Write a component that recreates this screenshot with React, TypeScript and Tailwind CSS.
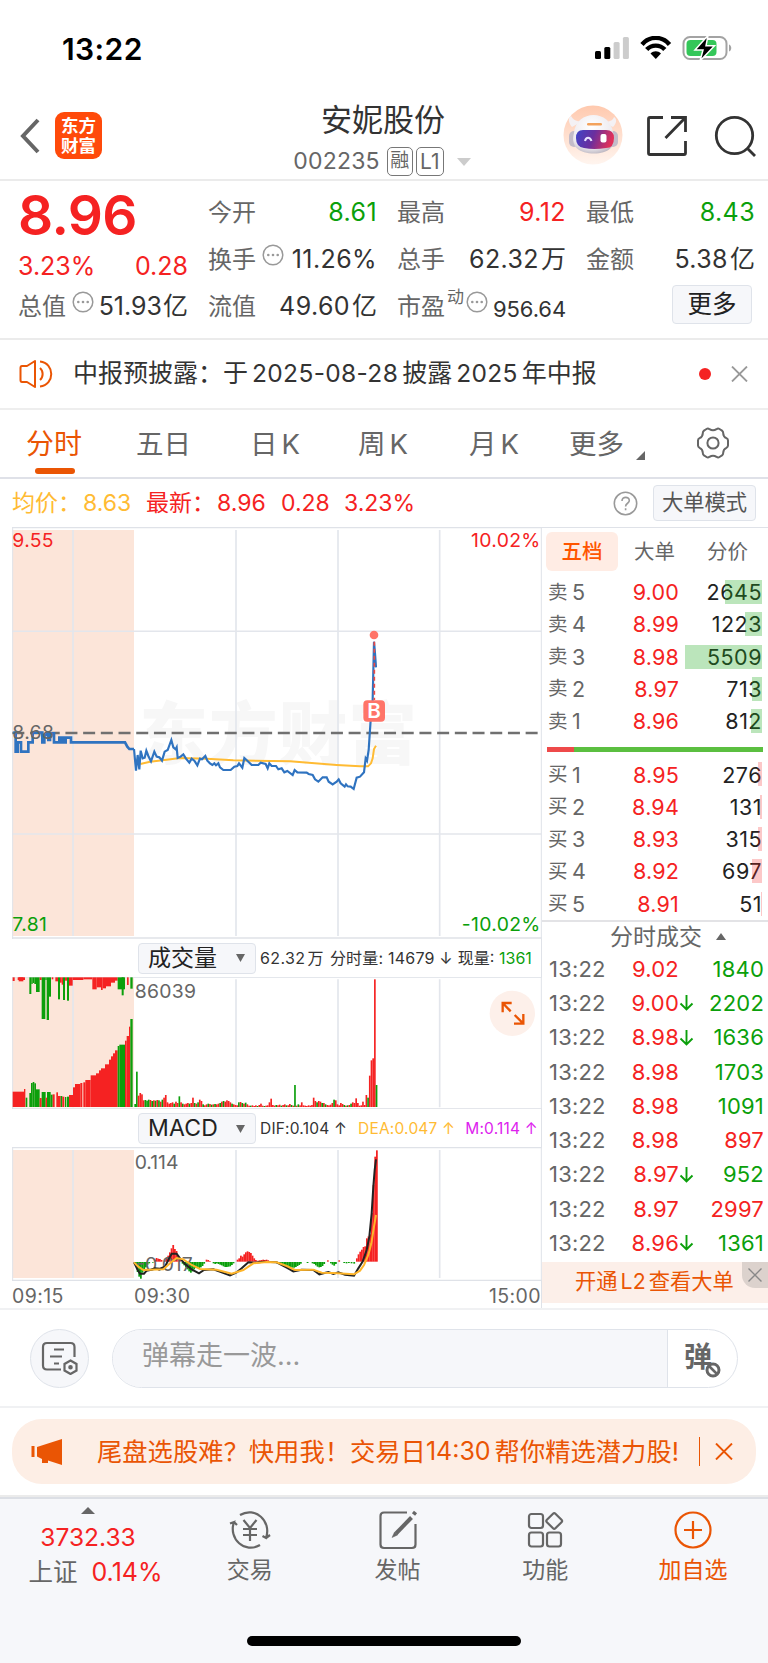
import React from 'react'

const RED = '#f52222'
const GREEN = '#0b9f0b'

// [x0, x1, height, up]
const auctionBottom: [number, number, number, boolean][] = [
  [38, 72, 46, true], [72, 76, 54, true], [77, 82, 28, false],
  [88, 93, 42, false], [93, 98, 72, false], [98, 103, 75, false], [103, 108, 71, false], [108, 119, 53, false],
  [119, 125, 27, true], [125, 137, 45, false], [137, 141, 28, true], [141, 152, 45, false], [152, 158, 37, false],
  [158, 164, 38, true], [169, 174, 44, true], [174, 182, 33, true], [182, 187, 33, false], [187, 193, 31, true],
  [195, 199, 30, false], [201, 207, 31, false], [207, 219, 36, true], [219, 225, 59, true], [225, 241, 69, true], [241, 247, 72, true],
  [250, 256, 74, true], [256, 272, 81, true], [272, 288, 95, true], [288, 297, 101, true], [297, 303, 110, true],
  [303, 315, 116, true], [315, 327, 128, true], [327, 333, 142, true], [333, 339, 152, true], [339, 345, 161, true],
  [345, 353, 170, true], [353, 358, 183, false], [358, 375, 187, false], [375, 380, 199, true], [380, 387, 213, true],
  [387, 391, 241, true], [391, 398, 264, false],
]

const auctionTop: [number, number, number, boolean][] = [
  [38, 44, 11, true], [53, 75, 8, true], [56, 70, 12, true], [88, 94, 50, false], [94, 98, 20, false], [98, 103, 17, false],
  [103, 108, 20, false], [108, 119, 44, false], [119, 125, 8, true], [125, 136, 125, false], [136, 140, 8, false],
  [140, 147, 128, false], [147, 153, 58, false], [155, 160, 6, true], [166, 174, 12, true], [174, 180, 66, false],
  [180, 185, 16, true], [185, 189, 22, true], [189, 195, 68, false], [195, 201, 10, true], [201, 207, 70, false],
  [207, 218, 25, true], [218, 250, 8, true], [250, 277, 6, true], [277, 290, 36, true], [290, 303, 30, true], [303, 308, 38, true],
  [308, 318, 33, true], [318, 333, 27, true], [333, 345, 16, true], [345, 353, 10, true], [353, 375, 36, false],
  [365, 371, 54, false], [381, 386, 23, true], [391, 398, 34, false],
]

// minute volume, negative means a falling minute
const volume = [
  -9, -106, 34, 42, 38, 20, -21, -19, -22, 21, -18, 20, -19, 21, -20, 16, -22, 28, 36, 14,
  10, 12, 14, -10, 16, 12, -32, 14, -10, 8, 10, 12, -10, 12, 28, -12, 10, -14, 22, 18,
  -8, 5, 8, -10, 9, -7, 8, -9, 8, 10, -12, 16, -18, 16, 20, 18, 14, -10, 8, 6,
  5, -14, 15, -12, 10, -13, 8, 4, -4, 5, 3, 5, -3, 6, 10, 4, -3, 4, 5, 14,
  25, 6, 4, -6, 5, 7, -4, 6, 8, -5, 5, 9, -6, 4, -66, 4, -8, 5, 14, 5,
  4, 3, 5, 4, 6, 28, 18, -14, 18, 16, -12, 12, -8, 6, 5, 7, 12, -22, 20, 8,
  5, 12, 9, -6, 4, -5, 6, -10, 14, 12, 26, 12, 4, 5, 16, 6, 36, -28, 94, 140,
  146, 383, -66,
]

const macd: [number, number][] = [
  [405, -14], [410, -30], [415, -44], [420, -50], [425, -32], [430, -26], [435, -16], [440, -8], [445, -4], [456, -2],
  [462, 6], [467, 11], [472, 9], [477, 8], [482, 5], [492, 4], [497, 10], [502, 18], [507, 28], [512, 40], [517, 50],
  [522, 38], [527, 32], [532, 18], [537, 8], [545, -5], [550, -10], [555, -16], [560, -22], [565, -28], [570, -32],
  [575, -28], [580, -22], [585, -18], [590, -16], [595, -18], [600, -16], [605, -12], [610, -5], [617, 6], [622, 5],
  [627, 2], [638, -4], [643, -6], [648, -4], [653, -6], [658, -8], [663, -10], [668, -13], [673, -15], [678, -15],
  [683, -14], [688, -13], [693, -9], [698, -4], [710, 6], [715, 10], [720, 18], [725, 15], [730, 22], [735, 28],
  [740, 31], [745, 29], [750, 26], [755, 18], [760, 10], [765, 5], [772, 3], [777, 4], [782, 5], [787, 6], [792, 5],
  [797, 6], [802, 4], [825, -3], [830, -5], [835, -6], [840, -7], [845, -8], [850, -10], [855, -11], [860, -13],
  [865, -15], [870, -16], [875, -17], [880, -17], [885, -15], [890, -12], [895, -9], [900, -5], [920, -3], [935, -4],
  [940, -6], [945, -10], [950, -14], [955, -16], [960, -15], [965, -12], [970, -6], [981, 4], [990, -4], [995, -8],
  [1000, -11], [1005, -6], [1015, 4], [1030, -3], [1037, -4], [1044, -3], [1052, -4], [1060, -5], [1068, 10],
  [1073, 22], [1078, 30], [1083, 36], [1088, 44], [1093, 46], [1098, 70], [1103, 76], [1108, 82], [1113, 146],
  [1118, 230], [1123, 315], [1128, 334],
]

const asks = [
  { name: '卖', level: 5, price: '9.00', qty: '2645', bar: 'w-[37px]' },
  { name: '卖', level: 4, price: '8.99', qty: '1223', bar: 'w-[17px]' },
  { name: '卖', level: 3, price: '8.98', qty: '5509', bar: 'w-[77px]' },
  { name: '卖', level: 2, price: '8.97', qty: '713', bar: 'w-[10px]' },
  { name: '卖', level: 1, price: '8.96', qty: '812', bar: 'w-[11px]' },
]

const bids = [
  { name: '买', level: 1, price: '8.95', qty: '276', bar: 'w-[4px]' },
  { name: '买', level: 2, price: '8.94', qty: '131', bar: 'w-[2px]' },
  { name: '买', level: 3, price: '8.93', qty: '315', bar: 'w-[4px]' },
  { name: '买', level: 4, price: '8.92', qty: '697', bar: 'w-[10px]' },
  { name: '买', level: 5, price: '8.91', qty: '51', bar: 'w-px' },
]

const trades = [
  { price: '9.02', down: false, qty: '1840', sell: true },
  { price: '9.00', down: true, qty: '2202', sell: true },
  { price: '8.98', down: true, qty: '1636', sell: true },
  { price: '8.98', down: false, qty: '1703', sell: true },
  { price: '8.98', down: false, qty: '1091', sell: true },
  { price: '8.98', down: false, qty: '897', sell: false },
  { price: '8.97', down: true, qty: '952', sell: true },
  { price: '8.97', down: false, qty: '2997', sell: false },
  { price: '8.96', down: true, qty: '1361', sell: true },
]

function StatusBar() {
  return (
    <div className="flex h-[98px] items-center justify-between pl-[62px] pr-[36px]">
      <span className="text-[30px] font-semibold tracking-[0.4px] text-black">13:22</span>
      <svg width="137" height="26" viewBox="0 0 137 26">
        <rect x="0" y="15" width="6" height="8" rx="1.5" />
        <rect x="9.3" y="11" width="6" height="12" rx="1.5" />
        <rect x="18.6" y="6" width="6" height="17" rx="1.5" fill="#ccc" />
        <rect x="27.9" y="1" width="6" height="22" rx="1.5" fill="#ccc" />
        <g fill="none" stroke="#000" strokeWidth="4.4">
          <path d="M47 8.5 C54.5 -0.3 67 -0.3 74.5 8.5" />
          <path d="M51.7 13.6 C56.5 8.3 65 8.3 69.8 13.6" />
        </g>
        <path d="M55.5 17.5 C58.5 14.6 63 14.6 66 17.5 L60.8 23 Z" />
        <rect x="88.5" y="1" width="43" height="22" rx="6.5" fill="none" stroke="#a3a3a3" strokeWidth="2" />
        <path d="M134 8.5 C137 9.5 137 14.5 134 15.5 Z" fill="#a3a3a3" />
        <rect x="91.5" y="4" width="30" height="16" rx="4" fill="#34c759" />
        <path d="M113 -0.5 L100 14 H108 L105 25 L119.500 9.800 H111 Z" stroke="#fff" strokeWidth="1.5" />
      </svg>
    </div>
  )
}

function Header() {
  return (
    <div className="flex h-[83px] border-b-2 border-[#ebebeb]">
      <div className="flex w-[259px] items-start pl-[19px] pt-[14px]">
        <svg className="mt-[5px]" width="22" height="38" viewBox="0 0 22 38" fill="none" stroke="#666" strokeWidth="4">
          <path d="M19 3 L4 19 L19 35" />
        </svg>
        <div className="ml-[14px] h-[47px] w-[47px] rounded-[9px] bg-[#ff4a0a] pt-[4px] text-center text-[17.5px] font-bold leading-[19.5px] text-white">
          东方
          <br />
          财富
        </div>
      </div>
      <div className="flex flex-1 flex-col items-center">
        <div className="mt-[4px] text-[31px] leading-[36px] text-[#333]">安妮股份</div>
        <div className="mr-[2px] mt-[8px] flex h-[31px] items-center text-[#666]">
          <span className="text-[23px] tracking-[0.2px]">002235</span>
          <span className="ml-[7px] flex h-[29px] w-[26px] items-center justify-center rounded-[5px] border-[1.5px] border-[#777] text-[19px]">融</span>
          <span className="ml-[3px] flex h-[29px] w-[28px] items-center justify-center rounded-[5px] border-[1.5px] border-[#777] text-[21px]">L1</span>
          <svg className="ml-[13px]" width="14" height="8" viewBox="0 0 14 8">
            <path d="M0 0 H14 L7 8 Z" fill="#ccc" />
          </svg>
        </div>
      </div>
      <div className="flex w-[261px] items-start pl-[56px]">
        <svg className="mt-[7px]" width="60" height="60" viewBox="0 0 60 60">
          <defs>
            <linearGradient id="halo" x1="0" y1="0" x2="0" y2="1">
              <stop offset="0" stopColor="#ffc9ae" />
              <stop offset="1" stopColor="#fff5ef" />
            </linearGradient>
            <linearGradient id="visor" x1="0" y1="0" x2="1" y2="0.2">
              <stop offset="0" stopColor="#3f45c8" />
              <stop offset="0.5" stopColor="#6a2f9e" />
              <stop offset="1" stopColor="#e0305a" />
            </linearGradient>
            <radialGradient id="shell" cx="0.45" cy="0.3" r="0.8">
              <stop offset="0" stopColor="#fff" />
              <stop offset="0.7" stopColor="#ece9ee" />
              <stop offset="1" stopColor="#a9a2ae" />
            </radialGradient>
          </defs>
          <circle cx="30" cy="30" r="29.5" fill="url(#halo)" />
          <path d="M9 22 C5 17 5 13 8 11 C10 15 14 16 18 17 Z M50 22 C54 18 54 14 51 12 C50 16 46 16 42 18 Z" fill="#f4f1f4" />
          <rect x="6" y="26" width="10" height="16" rx="5" fill="#c3bcc9" />
          <rect x="45" y="26" width="10" height="16" rx="5" fill="#c3bcc9" />
          <path d="M11 28 C13 4 48 4 50 28 C54 42 45 48.500 31 48.500 C17 48.500 7 42 11 28 Z" fill="url(#shell)" />
          <rect x="24" y="18" width="15" height="2.6" rx="1.3" fill="#f3a25c" />
          <path d="M20 25 H43 Q51 25 51 33 Q51 43 43 43 Q31 45 21 43 Q13 42 13 33 Q13 25 20 25 Z" fill="url(#visor)" />
          <path d="M22 36 C23 31.500 27 31.500 28.500 36" fill="none" stroke="#e8e4ff" strokeWidth="2" />
          <rect x="37.500" y="29" width="6" height="8.500" rx="2" fill="#fff" />
        </svg>
        <svg className="ml-[23px] mt-[17px]" width="42" height="42" viewBox="0 0 42 42" fill="none" stroke="#333" strokeWidth="2.8">
          <path d="M17 2.5 H4 Q2.5 2.5 2.5 4 V38 Q2.5 39.5 4 39.5 H38 Q39.5 39.5 39.5 38 V26" />
          <path d="M25 2.5 H39.5 V17 M39 3 L19.5 23" />
        </svg>
        <svg className="ml-[26px] mt-[17px]" width="42" height="42" viewBox="0 0 42 42" fill="none" stroke="#333" strokeWidth="2.8">
          <circle cx="20.5" cy="20.5" r="18.2" />
          <path d="M33 33 L41 41" />
        </svg>
      </div>
    </div>
  )
}

function Dots() {
  return (
    <svg className="shrink-0" width="22" height="22" viewBox="0 0 22 22">
      <circle cx="11" cy="11" r="9.8" fill="none" stroke="#999" strokeWidth="1.5" />
      <circle cx="6.3" cy="11" r="1.3" fill="#999" />
      <circle cx="11" cy="11" r="1.3" fill="#999" />
      <circle cx="15.7" cy="11" r="1.3" fill="#999" />
    </svg>
  )
}

type StatProps = { label: string; value: string; unit?: string; color?: string; dots?: boolean }

function Stat({ label, value, unit, color = 'text-[#333]', dots = false }: StatProps) {
  return (
    <div className="flex h-[47px] w-[169px] items-center whitespace-nowrap">
      <span className="text-[#666]">{label}</span>
      {dots && <div className="-mt-[10px] ml-[6px]"><Dots /></div>}
      <span className={`ml-auto text-[25px] tracking-[0.4px] ${color}`}>{value}</span>
      {unit && <span className="ml-[2px] text-[25px] text-[#333]">{unit}</span>}
    </div>
  )
}

function Quote() {
  return (
    <div className="flex h-[159px] gap-[20px] border-b-2 border-[#ebebeb] pl-[18px] pt-[8px] text-[24px]">
      <div className="w-[170px]">
        <div className="flex h-[53px] items-center text-[55px] font-semibold tracking-[-0.6px] text-[#f52222]">8.96</div>
        <div className="flex h-[41px] items-end justify-between text-[25px] leading-[34px] text-[#f52222]">
          <span>3.23%</span>
          <span>0.28</span>
        </div>
        <div className="flex h-[47px] items-center whitespace-nowrap">
          <span className="text-[#666]">总值</span>
          <div className="-mt-[10px] ml-[6px]"><Dots /></div>
          <span className="ml-auto text-[25px] text-[#333]">51.93</span>
          <span className="ml-px text-[25px] text-[#333]">亿</span>
        </div>
      </div>
      <div>
        <Stat label="今开" value="8.61" color="text-[#0b9f0b]" />
        <Stat label="换手" value="11.26%" dots />
        <Stat label="流值" value="49.60" unit="亿" />
      </div>
      <div>
        <Stat label="最高" value="9.12" color="text-[#f52222]" />
        <Stat label="总手" value="62.32" unit="万" />
        <div className="flex h-[47px] w-[169px] items-center whitespace-nowrap">
          <span className="text-[#666]">市盈</span>
          <span className="-mt-[18px] ml-[2px] text-[17px] text-[#666]">动</span>
          <div className="-mt-[10px] ml-[2px]"><Dots /></div>
          <span className="ml-auto pt-[5px] text-[22px] tracking-[-0.1px] text-[#333]">956.64</span>
        </div>
      </div>
      <div>
        <Stat label="最低" value="8.43" color="text-[#0b9f0b]" />
        <Stat label="金额" value="5.38" unit="亿" />
        <div className="ml-[86px] mt-[2px] flex h-[39px] w-[80px] items-center justify-center rounded-[4px] border-[1.5px] border-[#dfe3ea] bg-[#f6f7fa] text-[24.5px] text-[#222]">
          更多
        </div>
      </div>
    </div>
  )
}

function Notice() {
  return (
    <div className="flex h-[70px] items-center border-b-2 border-[#eee] pl-[19px] pr-[20px]">
      <svg width="34" height="30" viewBox="0 0 34 30" fill="none" stroke="#ea5504" strokeWidth="2">
        <path d="M16 2 L8 7 H3 Q1.5 7 1.5 9 V21 Q1.5 23 3 23 H8 L16 28 Z" strokeLinejoin="round" />
        <path d="M21 9 C24.5 12 24.5 18 21 21 M21 2.5 C36 4 36 26 21 27.5" />
      </svg>
      <div className="ml-[20px] flex whitespace-nowrap text-[25px] text-[#333]">
        <span>中报预披露：于</span>
        <span className="ml-[4px] text-[24.5px] tracking-[0.35px]">2025-08-28</span>
        <span className="ml-[4px]">披露</span>
        <span className="ml-[4px] text-[24.5px] tracking-[0.35px]">2025</span>
        <span className="ml-[4px]">年中报</span>
      </div>
      <span className="ml-auto h-[12px] w-[12px] rounded-full bg-[#f52222]" />
      <svg className="ml-[20px]" width="17" height="16" viewBox="0 0 17 16" stroke="#999" strokeWidth="1.8">
        <path d="M1 0.5 L16 15.5 M16 0.5 L1 15.5" />
      </svg>
    </div>
  )
}

function Tabs() {
  return (
    <div className="flex h-[69px] whitespace-nowrap border-b-2 border-[#dfe1e8] pt-[13px] text-[27.5px] leading-[42px] text-[#666]">
      <div className="ml-[26px] w-[110px] text-[28px] text-[#ea5504]">
        分时
        <div className="ml-[9px] mt-[3px] h-[6px] w-[40px] rounded-[3px] bg-[#ea5504]" />
      </div>
      <div className="w-[114px]">五日</div>
      <div className="w-[108px]">日<span className="ml-[4px]">K</span></div>
      <div className="w-[111px]">周<span className="ml-[4px]">K</span></div>
      <div className="w-[100px]">月<span className="ml-[4px]">K</span></div>
      <div className="flex w-[127px]">
        更多
        <svg className="ml-[12px] mt-[28px]" width="9" height="9" viewBox="0 0 9 9">
          <path d="M9 0 V9 H0 Z" fill="#666" />
        </svg>
      </div>
      <svg className="mt-[4px]" width="34" height="32" viewBox="0 0 34 32" fill="none" stroke="#666" strokeWidth="2">
        <path d="M10.5 2 Q12 1 13.5 2.2 Q17 4.4 20.5 2.2 Q22 1 23.5 2 L26 3.6 Q27.3 4.6 27.2 6.2 Q27.3 9.8 30.4 11.2 Q32 12 32 13.5 V18.5 Q32 20 30.4 20.8 Q27.3 22.2 27.2 25.8 Q27.3 27.4 26 28.4 L23.5 30 Q22 31 20.5 29.8 Q17 27.6 13.5 29.8 Q12 31 10.5 30 L8 28.4 Q6.7 27.4 6.8 25.8 Q6.7 22.2 3.6 20.8 Q2 20 2 18.5 V13.5 Q2 12 3.6 11.2 Q6.7 9.8 6.8 6.2 Q6.7 4.6 8 3.6 Z" />
        <circle cx="17" cy="16" r="5.6" />
      </svg>
    </div>
  )
}

function AverageRow() {
  return (
    <div className="flex h-[48px] items-center whitespace-nowrap pl-[12px] pr-[12px] text-[23px]">
      <span className="w-[71px] text-[#ffbb33]">均价：</span>
      <span className="w-[63px] text-[#ffbb33]">8.63</span>
      <span className="w-[71px] text-[#f52222]">最新：</span>
      <span className="w-[64px] text-[#f52222]">8.96</span>
      <span className="w-[63px] text-[#f52222]">0.28</span>
      <span className="text-[#f52222]">3.23%</span>
      <svg className="ml-auto" width="25" height="25" viewBox="0 0 25 25" fill="none" stroke="#999" strokeWidth="1.6">
        <circle cx="12.5" cy="12.5" r="11.2" />
        <path d="M9 10 C9 5 16.5 5.3 16.3 9.8 C16.2 12.3 12.6 12.3 12.6 15.4 M12.6 17.2 V19.2" />
      </svg>
      <div className="ml-[15px] flex h-[36px] w-[103px] items-center justify-center rounded-[4px] border-[1.5px] border-[#dfe3ea] bg-[#f6f7fa] text-[21.3px] text-[#555]">
        大单模式
      </div>
    </div>
  )
}

function PriceChart() {
  return (
    <svg className="block" width="530" height="412" viewBox="36 21 1590 1236">
      <rect x="38" y="30" width="364" height="1218" fill="#fce5d9" />
      <text x="418" y="718" fontSize="206" fontWeight="900" letterSpacing="3" fill="#f7f7f7">东方财富</text>
      <g stroke="#e3e6ec" strokeWidth="5">
        <path d="M219 30 V1248 M708 30 V1248 M1014 30 V1248 M1319 30 V1248" />
        <path d="M38 334 H1624 M38 942 H1624" strokeWidth="4.5" />
        <path d="M36 23 H1626 M36 1254 H1626" strokeWidth="4" stroke="#dfe2e8" />
        <path d="M38 21 V1257 M1624 21 V1257" strokeWidth="3" stroke="#dfe2e8" />
      </g>
      <path d="M37 639 H1616" stroke="#707070" strokeWidth="7" strokeDasharray="36 17.1" />
      <path
        d="M40 638 H47 V695 H53 V667 H63 V695 H85 V667 H98 V638 H127 V667 H133 V645 H140 V640 H145 V660 H150 V640 H162 V667 H178 V653 H184 V667 H188 V653 H192 V667 H197 V653 H213 V667 H375 L382 680 L388 687 H402"
        fill="none" stroke="#2f73c0" strokeWidth="8"
      />
      <polyline
        points="421,732 450,725 500,719 540,714 620,716 700,721 870,724 1010,735 1080,739 1104,739 1113,730 1118,715 1122,687 1128,677"
        fill="none" stroke="#ffbb33" strokeWidth="6"
      />
      <polyline
        points="402,687 408,752 413,705 418,748 422,692 428,715 434,713 439,692 445,708 453,724 463,695 470,710 478,712 486,722 494,695 503,690 514,660 520,682 527,688 530,682 533,714 542,710 550,703 558,716 568,728 575,716 583,722 592,736 600,716 606,718 616,708 622,722 630,730 637,735 643,730 648,736 655,730 660,742 670,750 692,750 703,740 712,738 717,730 727,743 733,714 742,722 755,735 775,735 782,728 797,732 803,745 808,730 815,738 828,738 835,748 845,745 853,757 862,753 878,765 884,750 892,757 920,758 926,762 938,765 945,778 955,785 968,772 980,772 986,785 998,793 1010,785 1016,778 1022,790 1034,800 1038,793 1043,799 1052,800 1061,807 1070,773 1080,770 1092,757 1097,715 1101,722 1106,690 1112,600 1118,540 1122,365 1125,400 1128,442"
        fill="none" stroke="#2f73c0" strokeWidth="6.5"
      />
      <path d="M1123 365 V540" stroke="#ee4a44" strokeWidth="5" strokeDasharray="12 9" />
      <circle cx="1122" cy="345" r="13" fill="#ff7468" />
      <rect x="1090" y="541" width="65" height="64" rx="12" fill="#ff7468" />
      <text x="1122" y="595" fontSize="62" fontWeight="600" fill="#fff" textAnchor="middle">B</text>
      <g fontSize="58" letterSpacing="1">
        <text x="37" y="82" fill={RED}>9.55</text>
        <text x="37" y="658" fill="#666">8.68</text>
        <text x="37" y="1233" fill={GREEN}>7.81</text>
        <text x="1622" y="82" fill={RED} textAnchor="end">10.02%</text>
        <text x="1622" y="1233" fill={GREEN} textAnchor="end">-10.02%</text>
      </g>
    </svg>
  )
}

function VolumeChart() {
  return (
    <svg className="block" width="530" height="132" viewBox="36 141 1590 396">
      <rect x="38" y="141" width="364" height="391" fill="#fce5d9" />
      <path d="M219 148 V532 M708 148 V532 M1014 148 V532 M1319 148 V532" stroke="#e3e6ec" strokeWidth="5" />
      <path d="M36 142 H1626 M36 536 H1626 M38 141 V537 M1624 141 V537" stroke="#dfe2e8" strokeWidth="3" />
      {auctionBottom.map(([x0, x1, h, up]) => (
        <rect key={x0} x={x0} y={531 - h} width={x1 - x0} height={h} fill={up ? RED : GREEN} />
      ))}
      {auctionTop.map(([x0, x1, h, up]) => (
        <rect key={x0} x={x0} y={142} width={x1 - x0} height={h} fill={up ? RED : GREEN} />
      ))}
      {volume.map((v, i) => (
        <rect key={i} x={403 + i * 5.1} y={531 - Math.abs(v)} width={5} height={Math.abs(v)} fill={v > 0 ? RED : GREEN} />
      ))}
      <text x="404" y="205" fontSize="58" fill="#666" letterSpacing="1">86039</text>
      <circle cx="1537" cy="250" r="68" fill="#fdf0ea" />
      <g fill="none" stroke="#ea5504" strokeWidth="7">
        <path d="M1508 247 V219 H1535 M1508 219 L1532 244" />
        <path d="M1570 252 V281 H1542 M1570 281 L1544 255" />
      </g>
    </svg>
  )
}

function MacdChart() {
  return (
    <svg className="block" width="530" height="134" viewBox="36 141 1590 402">
      <rect x="38" y="150" width="364" height="384" fill="#fce5d9" />
      <path d="M219 150 V534 M708 150 V534 M1014 150 V534 M1319 150 V534" stroke="#e3e6ec" strokeWidth="5" />
      <path d="M36 143 H1626 M36 541 H1626" stroke="#dfe2e8" strokeWidth="4" />
      <path d="M38 141 V543 M1624 141 V543" stroke="#dfe2e8" strokeWidth="3" />
      {macd.map(([x, v]) => (
        <rect key={x} x={x} y={v > 0 ? 485 - v : 486} width={5.3} height={Math.abs(v)} fill={v > 0 ? RED : GREEN} />
      ))}
      <text x="404" y="208" fontSize="58" fill="#666">0.114</text>
      <text x="408" y="514" fontSize="58" fill="#666">-0.017</text>
      <polyline
        points="402,487 412,508 420,521 432,521 440,512 450,510 465,505 480,506 495,500 505,480 515,461 530,461 540,475 555,492 575,508 597,520 612,510 640,508 665,517 690,526 710,517 725,505 745,487 765,488 790,485 830,487 860,503 880,514 905,509 940,510 958,523 985,516 1000,522 1015,517 1035,524 1062,527 1075,505 1088,485 1100,450 1108,410 1115,340 1120,260 1124,210 1128,178"
        fill="none" stroke="#222" strokeWidth="6"
      />
      <polyline
        points="402,487 415,500 430,510 490,508 510,490 530,474 550,478 575,495 600,507 650,509 695,521 730,510 760,490 800,486 830,487 860,498 885,510 940,509 965,518 1000,519 1062,523 1080,512 1092,495 1105,465 1114,430 1122,380 1128,345"
        fill="none" stroke="#ffb52a" strokeWidth="6"
      />
    </svg>
  )
}

function Picker({ label }: { label: string }) {
  return (
    <div className="flex h-[31px] w-[118px] shrink-0 items-center rounded-[4px] border-[1.5px] border-[#dfe3ea] bg-[#f6f7fa] pl-[9px] pr-[10px] text-[23px] text-[#222]">
      {label}
      <svg className="ml-auto" width="9" height="8" viewBox="0 0 9 8">
        <path d="M0 0 H9 L4.5 8 Z" fill="#666" />
      </svg>
    </div>
  )
}

function Charts() {
  return (
    <div className="w-[530px]">
      <PriceChart />
      <div className="flex h-[38px] items-center whitespace-nowrap border-r border-[#dfe2e8] pl-[126px] text-[16px] text-[#333]">
        <Picker label="成交量" />
        <span className="ml-[4px] tracking-[0.4px]">62.32<span className="ml-[2px]">万</span></span>
        <span className="ml-[6px] tracking-[0.2px]">分时量: 14679 ↓</span>
        <span className="ml-[5px]">现量: <span className="text-[#0b9f0b]">1361</span></span>
      </div>
      <VolumeChart />
      <div className="flex h-[38px] items-center whitespace-nowrap border-r border-[#dfe2e8] pl-[126px] pt-px text-[15.5px] tracking-[0.2px] text-[#333]">
        <Picker label="MACD" />
        <span className="ml-[4px]">DIF:0.104 ↑</span>
        <span className="ml-[11px] text-[#ffbb33]">DEA:0.047 ↑</span>
        <span className="ml-[10px] text-[#dd22ee]">M:0.114 ↑</span>
      </div>
      <MacdChart />
      <div className="flex h-[27px] items-center border-r border-[#dfe2e8] pt-[2px] text-[19.5px] leading-[24px] tracking-[0.4px] text-[#666]">
        <span className="w-[122px]">09:15</span>
        <span>09:30</span>
        <span className="ml-auto">15:00</span>
      </div>
    </div>
  )
}

type LevelProps = { name: string; level: number; price: string; qty: string; bar: string; tint: string }

function Level({ name, level, price, qty, bar, tint }: LevelProps) {
  return (
    <div className="relative flex h-[32.3px] items-center text-[21.5px] tracking-[0.2px]">
      <span className="w-[24px] text-[19.5px] text-[#666]">{name}</span>
      <span className="w-[38px] text-[#666]">{level}</span>
      <span className="w-[69px] text-right text-[#f52222]">{price}</span>
      <span className="ml-auto tracking-[0.5px] text-[#222]">{qty}</span>
      <div className={`absolute right-0 top-[4px] h-[24px] ${bar} ${tint}`} />
    </div>
  )
}

function OrderBook() {
  return (
    <div className="w-[226px]">
      <div className="flex h-[48px] border-t border-[#dfe2e8] pt-[4px] text-[20.5px] leading-[39px] text-[#666]">
        <div className="ml-[4px] h-[39px] w-[72px] rounded-[6px] bg-[#ffece4] text-center font-medium text-[#ff5500]">五档</div>
        <div className="ml-[16px] w-[73px]">大单</div>
        <div>分价</div>
      </div>
      <div className="pl-[6px] pr-[6px] pt-[1px]">
        {asks.map((a) => (
          <Level key={a.level} {...a} tint="bg-[#1fa81f]/30" />
        ))}
      </div>
      <div className="ml-[5px] mr-[5px] mt-[10px] flex h-[5px] bg-[#5bbf40]">
        <div className="w-[27px] bg-[#ee4a4a]" />
      </div>
      <div className="pl-[6px] pr-[6px] pt-[6px]">
        {bids.map((b) => (
          <Level key={b.level} {...b} tint="bg-[#f52222]/25" />
        ))}
      </div>
      <div className="flex h-[32px] items-center border-t-2 border-[#e3e3e6] pl-[68px] text-[23px] text-[#666]">
        分时成交
        <svg className="ml-[14px]" width="10" height="7" viewBox="0 0 10 7">
          <path d="M0 7 H10 L5 0 Z" fill="#666" />
        </svg>
      </div>
      {trades.map((t, i) => (
        <div key={i} className="flex h-[34.3px] items-center pl-[7px] pr-[4px] text-[22px] tracking-[0.2px]">
          <span className="w-[62px] text-[#666]">13:22</span>
          <span className="w-[68px] text-right text-[#f52222]">{t.price}</span>
          <span className="w-[15px]">
            {t.down && (
              <svg width="15" height="16" viewBox="0 0 15 16" fill="none" stroke={GREEN} strokeWidth="1.9">
                <path d="M7.5 0 V14 M1.5 8.5 L7.5 14.5 L13.5 8.5" />
              </svg>
            )}
          </span>
          <span className={t.sell ? 'ml-auto text-[#0b9f0b]' : 'ml-auto text-[#f52222]'}>{t.qty}</span>
        </div>
      ))}
      <div className="relative mt-[1px] h-[41px] bg-[#fcefe9] pl-[33px] text-[21.3px] leading-[38px] text-[#ea5504]">
        开通<span className="mx-[3px]">L2</span>查看大单
        <div className="absolute right-0 top-0 flex h-[26px] w-[26px] items-center justify-center rounded-bl-[13px] bg-[#dcd2cd]">
          <svg width="14" height="14" viewBox="0 0 14 14" stroke="#888" strokeWidth="1.4">
            <path d="M0.5 0.5 L13.5 13.5 M13.5 0.5 L0.5 13.5" />
          </svg>
        </div>
      </div>
    </div>
  )
}

function Danmu() {
  return (
    <div className="flex h-[100px] items-center border-y-2 border-[#f0f1f3] pl-[30px]">
      <div className="flex h-[59px] w-[59px] items-center justify-center rounded-full border-[1.5px] border-[#dfe3ea] bg-[#f6f7fa]">
        <svg width="37" height="34" viewBox="0 0 37 34" fill="none" stroke="#666" strokeWidth="2.2">
          <path d="M20 28.5 H6 Q2 28.5 2 24.5 V6 Q2 2 6 2 H29.5 Q33.5 2 33.5 6 V16" />
          <path d="M13 8.5 H23 M9 15.5 H21 M13 22.5 H18" />
          <path d="M29.5 19.5 L35.5 23 V29.5 L29.5 33 L23.5 29.5 V23 Z" />
          <circle cx="29.5" cy="26.2" r="1.2" />
        </svg>
      </div>
      <div className="ml-[23px] flex h-[59px] w-[626px] overflow-hidden rounded-[30px] border-[1.5px] border-[#dfe3ea]">
        <div className="w-[555px] border-r-[1.5px] border-[#dfe3ea] bg-[#f6f7fa] pl-[29px] text-[27px] leading-[52px] text-[#999]">
          弹幕走一波...
        </div>
        <div className="relative pl-[16px] text-[28px] font-bold leading-[54px] text-[#666]">
          弹
          <svg className="absolute left-[37px] top-[32px]" width="16" height="16" viewBox="0 0 16 16">
            <circle cx="8" cy="8" r="6" fill="#fff" stroke="#666" strokeWidth="3" />
            <path d="M4 4 L12 12" stroke="#666" strokeWidth="2.5" />
          </svg>
        </div>
      </div>
    </div>
  )
}

function Promo() {
  return (
    <div className="border-b-2 border-[#ebebeb] px-[12px] pb-[11px] pt-[11px]">
      <div className="flex h-[65px] items-center whitespace-nowrap rounded-[30px] bg-[#fdeee5] pl-[19px] pr-[23px] text-[25.3px] text-[#ea5504]">
        <svg width="32" height="28" viewBox="0 0 32 28" fill="#ea5504">
          <rect x="0.5" y="8" width="3" height="11" />
          <path d="M6 9 L31 1 V27 L17 22.5 V25 H11 V21 L6 18.5 Z" />
        </svg>
        <span className="ml-[34px]">尾盘选股难？快用我！交易日</span>
        <span className="text-[25px]">14:30</span>
        <span className="ml-[4px]">帮你精选潜力股</span>
        <span className="w-[16px]">!</span>
        <div className="ml-auto h-[29px] w-[1.5px] bg-[#ea5504]" />
        <svg className="ml-[15px]" width="18" height="17" viewBox="0 0 18 17" stroke="#ea5504" strokeWidth="1.9">
          <path d="M1 0.5 L17 16.5 M17 0.5 L1 16.5" />
        </svg>
      </div>
    </div>
  )
}

function NavItem({ label, children, active = false }: { label: string; children: React.ReactNode; active?: boolean }) {
  return (
    <div className={`flex w-[147.7px] flex-col items-center pt-[11px] ${active ? 'text-[#ea5504]' : 'text-[#666]'}`}>
      <svg width="42" height="40" viewBox="0 0 42 40" fill="none" stroke="currentColor" strokeWidth="2.2">
        {children}
      </svg>
      <span className="mt-[3px] text-[23px] leading-[34px]">{label}</span>
    </div>
  )
}

function BottomBar() {
  return (
    <div className="h-[166px] border-t-2 border-[#dcdfe5] bg-[#f6f7fa]">
      <div className="flex h-[137px]">
        <div className="flex w-[176px] flex-col items-center pt-[8px] text-[24.5px]">
          <svg width="14" height="7" viewBox="0 0 14 7">
            <path d="M0 7 H14 L7 0 Z" fill="#666" />
          </svg>
          <span className="mt-[6px] leading-[35px] text-[#f52222]">3732.33</span>
          <div className="mr-[-15px] flex gap-[14px] leading-[34px]">
            <span className="text-[#666]">上证</span>
            <span className="text-[25px] text-[#f52222]">0.14%</span>
          </div>
        </div>
        <NavItem label="交易">
          <path d="M11 5 C26 -4 43 11 37 28 L33.5 26 M37 28 L41 25" />
          <path d="M31 35 C16 44 -1 29 5 12 L1 13.5 M5 12 L8 15" />
          <path d="M14.5 10 L21 18 L27.5 10 M14 19 H28 M14 25 H28 M21 18 V31" />
        </NavItem>
        <NavItem label="发帖">
          <path d="M30 2.5 H7 Q3.5 2.5 3.5 6 V34.5 Q3.5 38 7 38 H35 Q38.5 38 38.5 34.5 V14" />
          <path d="M34.5 7.5 L19 23.5" strokeWidth="4" />
          <path d="M17.6 22 L20.6 25 L15 27.5 Z" fill="currentColor" strokeWidth="0.5" />
          <path d="M38.5 2 L36.5 4.5" strokeWidth="4" />
        </NavItem>
        <NavItem label="功能">
          <rect x="5" y="4" width="14" height="14" rx="2.5" />
          <rect x="5" y="22.5" width="14" height="14" rx="2.5" />
          <rect x="23" y="22.5" width="14" height="14" rx="2.5" />
          <path d="M29 3.7 Q30.2 2.5 31.4 3.7 L37.5 9.8 Q38.7 11 37.5 12.2 L31.4 18.3 Q30.2 19.5 29 18.3 L22.9 12.2 Q21.7 11 22.9 9.8 Z" />
        </NavItem>
        <NavItem label="加自选" active>
          <circle cx="21" cy="20" r="17.5" />
          <path d="M12 20 H30 M21 11 V29" />
        </NavItem>
      </div>
      <div className="mx-auto h-[10px] w-[274px] rounded-full bg-black" />
    </div>
  )
}

export default function App() {
  return (
    <div className="h-[1663px] w-[768px] overflow-hidden bg-white font-['Inter','Noto_Sans_CJK_SC',sans-serif]">
      <StatusBar />
      <Header />
      <Quote />
      <Notice />
      <Tabs />
      <AverageRow />
      <div className="flex h-[781px] pl-[12px]">
        <Charts />
        <OrderBook />
      </div>
      <Danmu />
      <Promo />
      <BottomBar />
    </div>
  )
}
